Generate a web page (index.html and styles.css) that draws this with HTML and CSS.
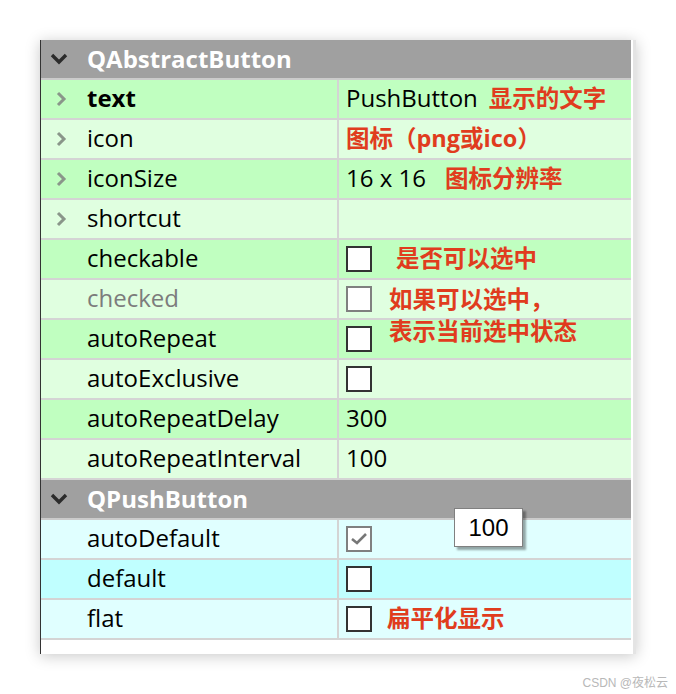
FILE: index.html
```html
<!DOCTYPE html>
<html lang="zh">
<head>
    <meta charset="UTF-8">
    <title>QPushButton 属性</title>
    <link rel="stylesheet" href="styles.css">
</head>
<body>
    <div class="panel">
        <div class="sheet">
            <!-- QAbstractButton -->
            <div class="group">
                <svg class="fold" width="18" height="12" viewBox="0 0 18 12"><polyline points="2,2 9,9 16,2" /></svg>
                <span>QAbstractButton</span>
            </div>
            <div class="row green">
                <div class="name"><svg class="arrow" width="12" height="16" viewBox="0 0 12 16"><polyline points="3,2 9,8 3,14" /></svg><b>text</b></div>
                <div class="value">PushButton<span class="note gap">显示的文字</span></div>
            </div>
            <div class="row green light">
                <div class="name"><svg class="arrow" width="12" height="16" viewBox="0 0 12 16"><polyline points="3,2 9,8 3,14" /></svg>icon</div>
                <div class="value"><span class="note">图标（png或ico）</span></div>
            </div>
            <div class="row green">
                <div class="name"><svg class="arrow" width="12" height="16" viewBox="0 0 12 16"><polyline points="3,2 9,8 3,14" /></svg>iconSize</div>
                <div class="value">16 x 16<span class="note wide">图标分辨率</span></div>
            </div>
            <div class="row green light">
                <div class="name"><svg class="arrow" width="12" height="16" viewBox="0 0 12 16"><polyline points="3,2 9,8 3,14" /></svg>shortcut</div>
                <div class="value"></div>
            </div>
            <div class="row green">
                <div class="name">checkable</div>
                <div class="value"><span class="box"></span><span class="note">是否可以选中</span></div>
            </div>
            <div class="row green light">
                <div class="name muted">checked</div>
                <div class="value"><span class="box off"></span>
                    <div class="callout">如果可以选中，<br>表示当前选中状态</div>
                </div>
            </div>
            <div class="row green">
                <div class="name">autoRepeat</div>
                <div class="value"><span class="box"></span></div>
            </div>
            <div class="row green light">
                <div class="name">autoExclusive</div>
                <div class="value"><span class="box"></span></div>
            </div>
            <div class="row green">
                <div class="name">autoRepeatDelay</div>
                <div class="value">300</div>
            </div>
            <div class="row green light">
                <div class="name">autoRepeatInterval</div>
                <div class="value">100</div>
            </div>

            <!-- QPushButton -->
            <div class="group">
                <svg class="fold" width="18" height="12" viewBox="0 0 18 12"><polyline points="2,2 9,9 16,2" /></svg>
                <span>QPushButton</span>
            </div>
            <div class="row cyan light">
                <div class="name">autoDefault</div>
                <div class="value"><span class="box off"><svg width="20" height="20" viewBox="0 0 20 20"><polyline points="3,10 8,14 17,5" /></svg></span></div>
            </div>
            <div class="row cyan">
                <div class="name">default</div>
                <div class="value"><span class="box"></span></div>
            </div>
            <div class="row cyan light">
                <div class="name">flat</div>
                <div class="value"><span class="box"></span><span class="note flat">扁平化显示</span></div>
            </div>
        </div>
        <div class="edge"></div>

        <!-- tooltip of the spin box -->
        <div class="tip">100</div>
    </div>

    <div class="mark">CSDN @夜松云</div>
</body>
</html>
```

FILE: styles.css
```css
body {
    margin: 0;
    padding: 0;
    background: #fff;
    font-family: "Open Sans", "Noto Sans CJK SC", sans-serif;
    color: #000;
}

.panel {
    position: relative;
    display: flex;
    margin: 40px 0 0 40px;
    width: 595px;
    background: #fff;
    border-left: 1px solid #333;
    box-shadow: 0 2px 14px rgba(0, 0, 0, 0.22);
}

.sheet {
    width: 590px;
    padding-bottom: 14px;
}

.edge {
    width: 3px;
    margin-left: 2px;
    background: #e4e4e4;
}

.group {
    display: flex;
    align-items: center;
    height: 38px;
    background: #a0a0a0;
    border-bottom: 2px solid #cbcbcb;
    color: #fff;
    font-size: 24px;
    font-weight: bold;
}

.group span {
    padding-bottom: 2px;
}

.group .fold {
    margin: 0 19px 0 9px;
}

.fold polyline {
    fill: none;
    stroke: #2b2b2b;
    stroke-width: 3.4;
}

.row {
    display: grid;
    grid-template-columns: 298px 1fr;
    height: 38px;
    border-bottom: 2px solid #d4d4d4;
    font-size: 24px;
}

.row.green {
    background: #c0ffc0;
}

.row.green.light {
    background: #e0ffe0;
}

.row.cyan {
    background: #c0ffff;
}

.row.cyan.light {
    background: #e0ffff;
}

.name {
    display: flex;
    align-items: center;
    padding-left: 46px;
    padding-bottom: 3px;
    border-right: 2px solid #d4d4d4;
    position: relative;
}

.name .arrow {
    position: absolute;
    left: 14px;
    top: 11px;
}

.arrow polyline {
    fill: none;
    stroke: #8a968a;
    stroke-width: 3;
}

.muted {
    color: #7c7c7c;
}

.value {
    display: flex;
    align-items: center;
    padding-left: 7px;
    padding-bottom: 3px;
    position: relative;
}

.note {
    color: #e03c1e;
    font-weight: bold;
    font-size: 23.5px;
    position: relative;
    top: -1px;
}

.note.gap {
    margin-left: 11px;
}

.note.wide {
    margin-left: 19px;
}

.note.flat {
    margin-left: -9px;
}

.box {
    display: flex;
    align-items: center;
    justify-content: center;
    width: 22px;
    height: 22px;
    margin-top: 3px;
    border: 2px solid #333;
    background: #fff;
    margin-right: 24px;
}

.box.off {
    border-color: #808080;
}

.box svg polyline {
    fill: none;
    stroke: #777;
    stroke-width: 2.6;
}

.callout {
    position: absolute;
    left: 50px;
    top: 3px;
    color: #e03c1e;
    font-weight: bold;
    font-size: 23.5px;
    line-height: 32px;
    z-index: 2;
    white-space: nowrap;
}

.tip {
    position: absolute;
    left: 413px;
    top: 468px;
    width: 67px;
    height: 37px;
    border: 1px solid #808080;
    background: #fff;
    box-shadow: 3px 3px 2px rgba(0, 0, 0, 0.35);
    font-family: "Liberation Sans", Arial, sans-serif;
    font-size: 24px;
    line-height: 37px;
    text-align: center;
}

.mark {
    margin-top: 19px;
    padding-right: 8px;
    text-align: right;
    font-family: "Liberation Sans", "Noto Sans CJK SC", sans-serif;
    font-size: 12px;
    color: #b8b8b8;
}
```
